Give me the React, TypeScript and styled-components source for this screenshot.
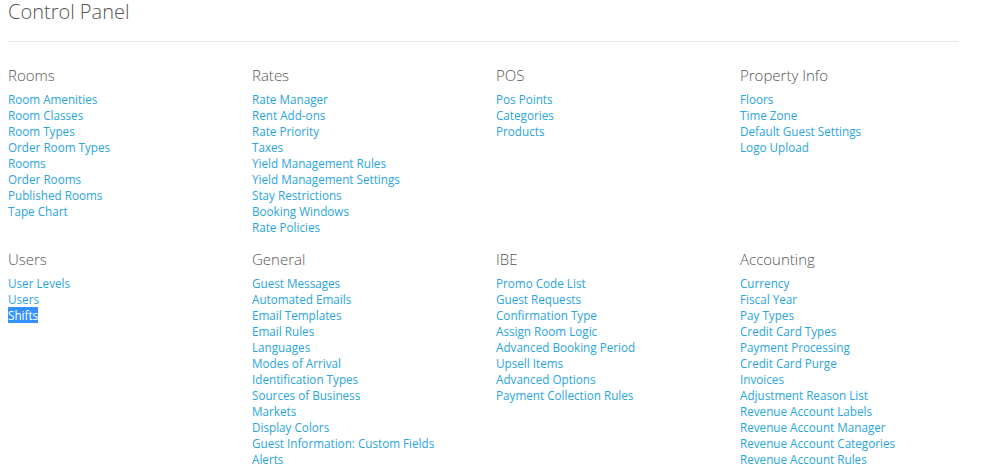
import styled, { createGlobalStyle } from "styled-components";

const GlobalStyle = createGlobalStyle`
  body {
    margin: 0;
    background: #ffffff;
    font-family: "Open Sans", "Liberation Sans", sans-serif;
  }
`;

const Page = styled.div`
  padding: 0 8px;
`;

const Title = styled.h1`
  margin: 0;
  font-size: 20px;
  line-height: 24px;
  font-weight: 300;
  color: #555555;
`;

const Rule = styled.hr`
  width: 950px;
  margin: 17px 0 0;
  border: 0;
  border-top: 1px solid #e8e8e8;
`;

const SectionGrid = styled.div`
  display: grid;
  grid-template-columns: repeat(4, 244px);
  row-gap: 14px;
  margin-top: 23px;
`;

const Section = styled.section`
  display: flex;
  flex-direction: column;
`;

const SectionTitle = styled.h2`
  margin: 0 0 6px;
  font-size: 15px;
  line-height: 20px;
  font-weight: 300;
  color: #555555;
`;

const LinkList = styled.ul`
  list-style: none;
  margin: 0;
  padding: 0;
`;

const LinkItem = styled.li`
  font-size: 11.7px;
  line-height: 16px;
`;

const NavLink = styled.a<{ $selected?: boolean }>`
  color: ${({ $selected }) => ($selected ? "#ffffff" : "#2aa5dd")};
  background: ${({ $selected }) => ($selected ? "#3390ff" : "transparent")};
  text-decoration: none;
  cursor: pointer;
  &:hover {
    text-decoration: underline;
  }
`;

type Group = { title: string; links: string[] };

const groups: Group[] = [
  {
    title: "Rooms",
    links: [
      "Room Amenities",
      "Room Classes",
      "Room Types",
      "Order Room Types",
      "Rooms",
      "Order Rooms",
      "Published Rooms",
      "Tape Chart",
    ],
  },
  {
    title: "Rates",
    links: [
      "Rate Manager",
      "Rent Add-ons",
      "Rate Priority",
      "Taxes",
      "Yield Management Rules",
      "Yield Management Settings",
      "Stay Restrictions",
      "Booking Windows",
      "Rate Policies",
    ],
  },
  { title: "POS", links: ["Pos Points", "Categories", "Products"] },
  {
    title: "Property Info",
    links: ["Floors", "Time Zone", "Default Guest Settings", "Logo Upload"],
  },
  { title: "Users", links: ["User Levels", "Users", "Shifts"] },
  {
    title: "General",
    links: [
      "Guest Messages",
      "Automated Emails",
      "Email Templates",
      "Email Rules",
      "Languages",
      "Modes of Arrival",
      "Identification Types",
      "Sources of Business",
      "Markets",
      "Display Colors",
      "Guest Information: Custom Fields",
      "Alerts",
    ],
  },
  {
    title: "IBE",
    links: [
      "Promo Code List",
      "Guest Requests",
      "Confirmation Type",
      "Assign Room Logic",
      "Advanced Booking Period",
      "Upsell Items",
      "Advanced Options",
      "Payment Collection Rules",
    ],
  },
  {
    title: "Accounting",
    links: [
      "Currency",
      "Fiscal Year",
      "Pay Types",
      "Credit Card Types",
      "Payment Processing",
      "Credit Card Purge",
      "Invoices",
      "Adjustment Reason List",
      "Revenue Account Labels",
      "Revenue Account Manager",
      "Revenue Account Categories",
      "Revenue Account Rules",
    ],
  },
];

export default function App() {
  return (
    <Page>
      <GlobalStyle />
      <Title>Control Panel</Title>
      <Rule />
      <SectionGrid>
        {groups.map((g) => (
          <Section key={g.title}>
            <SectionTitle>{g.title}</SectionTitle>
            <LinkList>
              {g.links.map((l) => (
                <LinkItem key={l}>
                  <NavLink
                    href="#"
                    $selected={g.title === "Users" && l === "Shifts"}
                  >
                    {l}
                  </NavLink>
                </LinkItem>
              ))}
            </LinkList>
          </Section>
        ))}
      </SectionGrid>
    </Page>
  );
}
